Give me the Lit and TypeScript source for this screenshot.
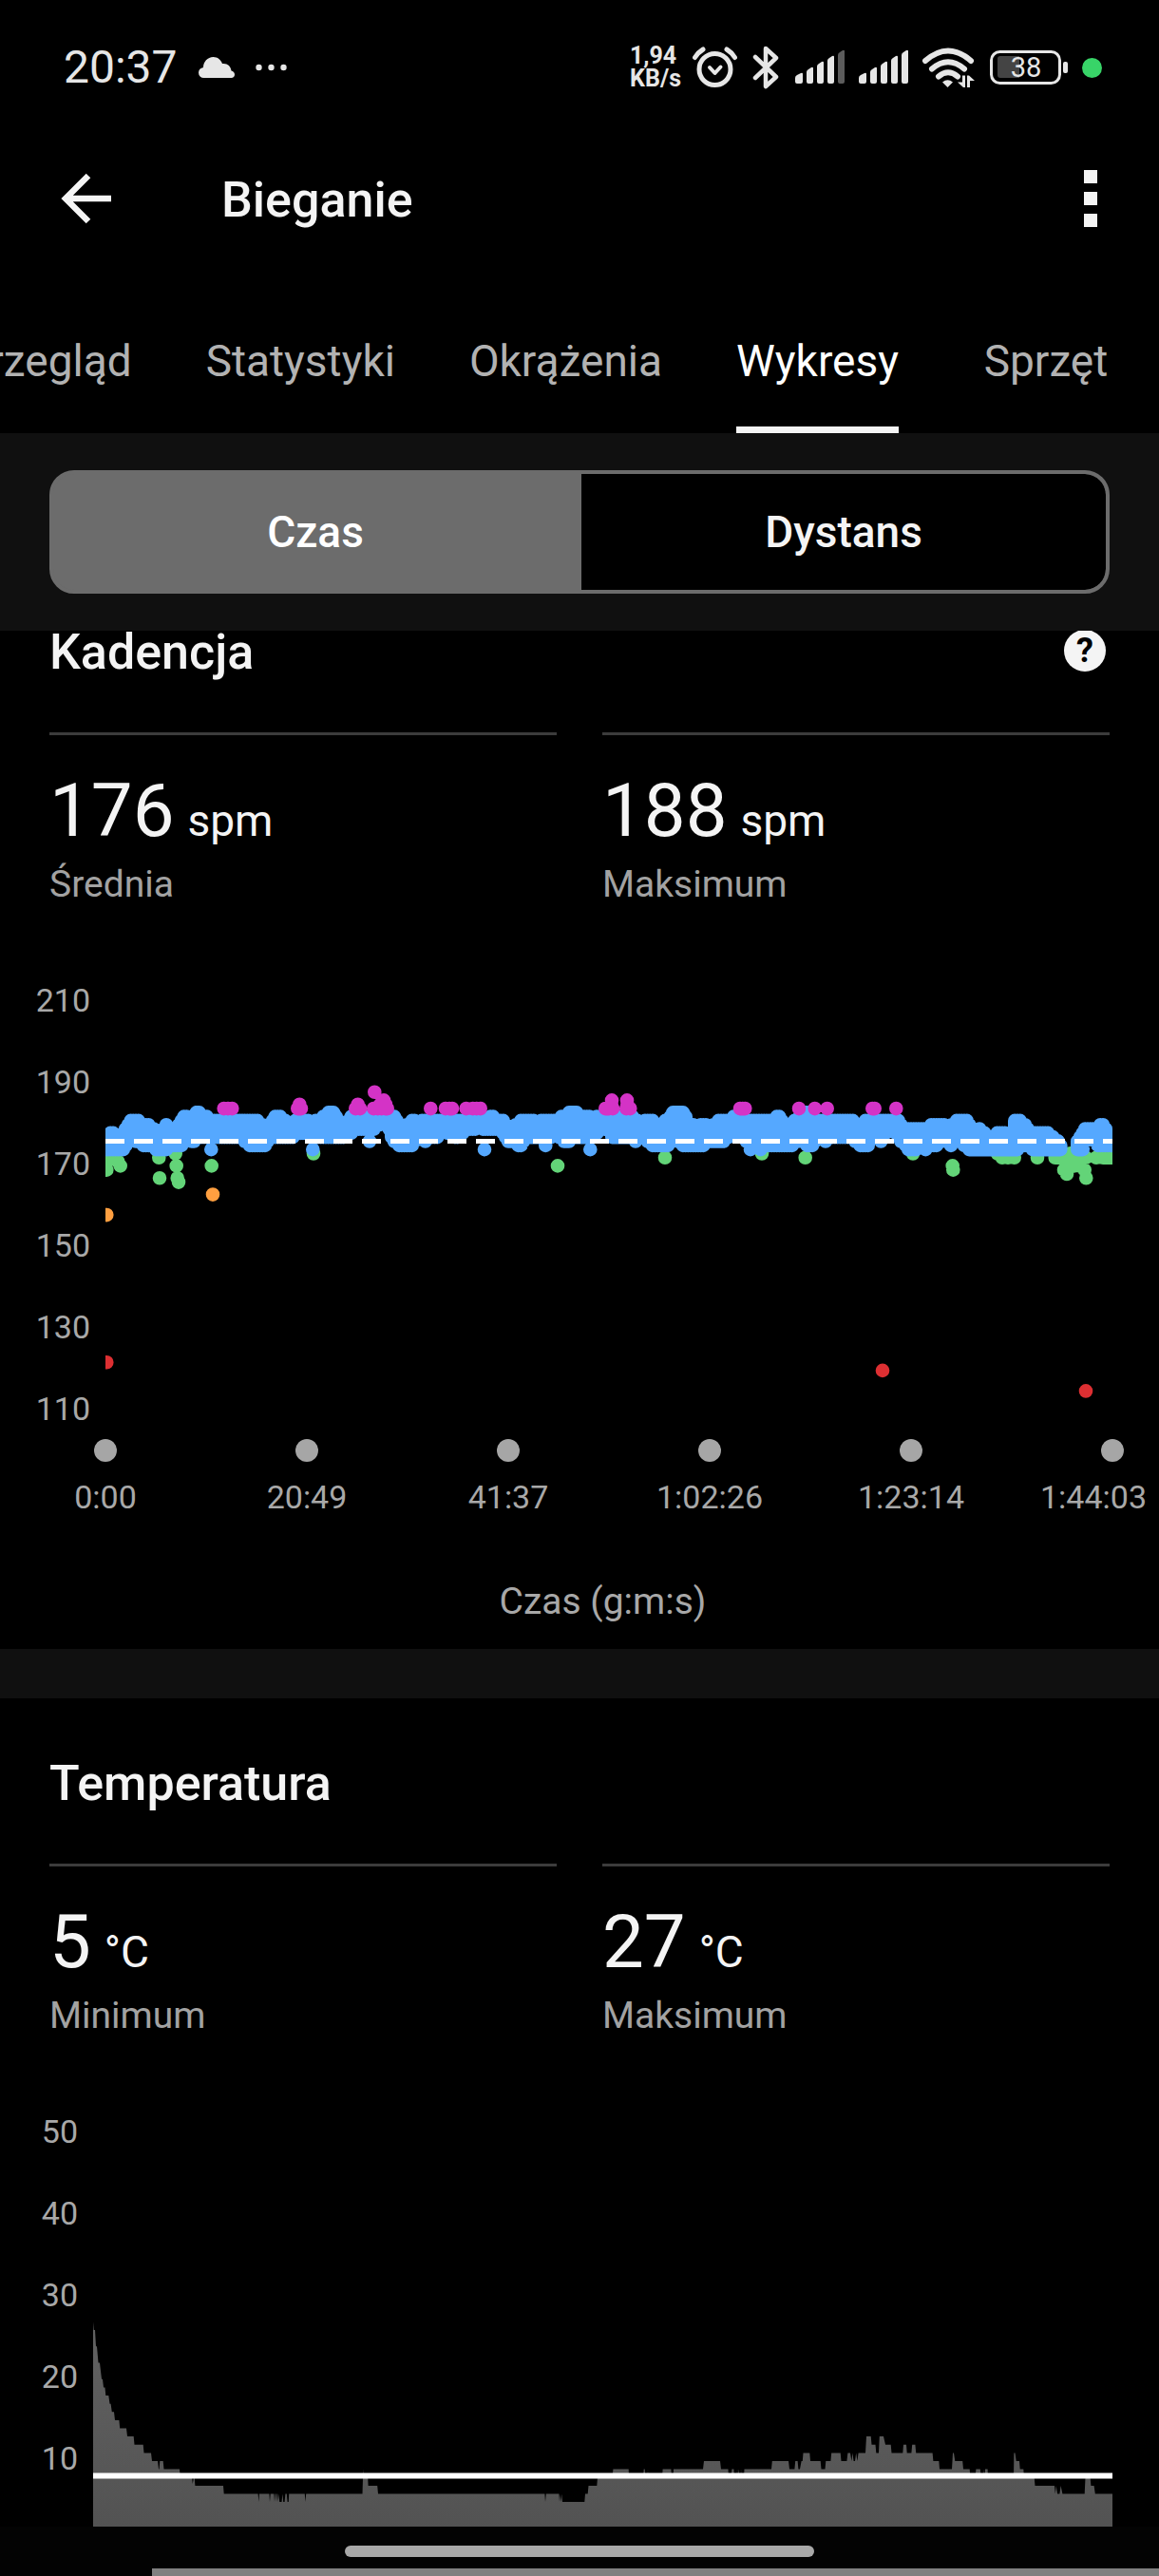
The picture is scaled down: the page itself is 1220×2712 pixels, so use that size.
import { LitElement, html, svg, css } from "lit";
import { customElement, property, state, query } from "lit/decorators.js";
import { classMap } from "lit/directives/class-map.js";

type Pt = [number, number];

/* ---------- cadence series: time in thirds of a plot unit, value in spm ---------- */

interface Band {
  upper: Pt[];
  lower: Pt[];
}

const CADENCE_BANDS: Band[] = [
  {
    upper: [
      [0, 177], [19, 178], [40, 177], [58, 178], [80, 181], [100, 181], [118, 180], [135, 180], [150, 179],
      [165, 177], [180, 179], [189, 180], [205, 179], [220, 178], [237, 181], [252, 182], [270, 181], [287, 183],
      [317, 182], [335, 181], [477, 181], [492, 180], [507, 179], [520, 180], [535, 182], [549, 182], [565, 181],
      [575, 180], [590, 180], [600, 181], [635, 181], [650, 180], [675, 181], [690, 182], [712, 183], [730, 182],
      [750, 179], [765, 181], [785, 182], [907, 182], [922, 181], [940, 179], [967, 181], [985, 180], [1005, 181],
      [1200, 181], [1217, 182], [1235, 181], [1252, 181], [1270, 179], [1283, 178], [1297, 180], [1317, 181],
      [1347, 181], [1365, 180], [1387, 181], [1420, 181], [1447, 182], [1478, 183], [1500, 182], [1523, 182],
      [1545, 181], [1555, 182], [1665, 182], [1685, 180], [1715, 181], [1747, 180], [1775, 181], [1797, 183],
      [1829, 183], [1842, 180], [1850, 180], [1869, 179], [1890, 180], [1909, 179], [1937, 181], [1970, 181],
      [1987, 182], [2017, 181], [2095, 181], [2130, 182], [2147, 180], [2160, 179], [2175, 181], [2217, 183],
      [2237, 181], [2357, 181], [2372, 180], [2382, 179], [2397, 181], [2500, 181], [2512, 180], [2527, 179],
      [2590, 179], [2617, 180], [2645, 180], [2662, 179], [2678, 180], [2689, 181], [2717, 181], [2732, 179],
      [2742, 178], [2763, 179], [2782, 177], [2797, 177], [2832, 178], [2852, 177], [2864, 178], [2872, 181],
      [2885, 181], [2902, 180], [2925, 178], [2967, 178], [2987, 177], [3002, 176], [3022, 175],
    ],
    lower: [
      [0, 174], [60, 174], [74, 177], [105, 176], [122, 175], [145, 175], [160, 174], [190, 174], [205, 175],
      [240, 175], [255, 177], [274, 176], [295, 177], [427, 177], [445, 176], [462, 175], [502, 175], [520, 177],
      [590, 177], [603, 179], [620, 178], [700, 177], [750, 177], [765, 178], [794, 179], [845, 179], [860, 180],
      [869, 181], [880, 181], [892, 180], [905, 177], [925, 175], [970, 175], [985, 177], [1040, 177], [1060, 178],
      [1067, 179], [1092, 178], [1112, 177], [1137, 179], [1162, 179], [1184, 180], [1197, 179], [1245, 179],
      [1260, 177], [1282, 176], [1312, 175], [1325, 177], [1405, 177], [1424, 178], [1437, 177], [1457, 176],
      [1480, 177], [1515, 177], [1550, 178], [1567, 179], [1587, 180], [1600, 177], [1700, 177], [1735, 175],
      [1777, 175], [1795, 177], [1830, 175], [1885, 175], [1905, 176], [1945, 176], [1960, 177], [1990, 178],
      [2007, 178], [2020, 176], [2095, 175], [2160, 175], [2180, 176], [2192, 177], [2215, 175], [2235, 175],
      [2250, 177], [2350, 177], [2370, 176], [2387, 175], [2407, 175], [2420, 178], [2460, 178], [2470, 179],
      [2487, 179], [2500, 178], [2515, 176], [2535, 174], [2552, 174], [2570, 175], [2615, 175], [2635, 176],
      [2650, 177], [2690, 177], [2702, 178], [2712, 175], [2732, 174], [2880, 174], [2893, 176], [2910, 175],
      [2940, 174], [3022, 174],
    ],
  },
  {
    upper: [[3070, 176], [3085, 178], [3102, 179], [3127, 179], [3142, 180], [3155, 180], [3165, 177], [3180, 177]],
    lower: [[3070, 174], [3087, 174], [3096, 177], [3115, 177], [3130, 175], [3180, 175]],
  },
];

const CADENCE_BLUE: Pt[] = [
  [287, 183], [334, 174], [655, 174], [712, 183], [834, 176], [1010, 176], [1197, 174], [1390, 175], [1531, 174],
  [1674, 176], [2037, 174], [2069, 174], [2274, 176], [2449, 176], [2590, 174], [2670, 175],
];

const CADENCE_PURPLE: Pt[] = [
  [374, 184], [387, 184], [400, 184], [607, 184], [618, 184], [613, 185], [790, 184], [804, 184], [797, 185],
  [847, 184], [860, 184], [872, 184], [884, 184], [890, 184], [868, 185], [885, 185], [879, 186], [850, 188],
  [1027, 184], [1074, 184], [1086, 184], [1095, 184], [1139, 184], [1160, 184], [1172, 184], [1184, 184],
  [1579, 184], [1590, 184], [1602, 184], [1599, 186], [1598, 185], [1645, 184], [1657, 184], [1648, 185],
  [1647, 186], [2004, 184], [2012, 184], [2020, 184], [2190, 184], [2240, 184], [2279, 184], [2422, 184],
  [2429, 184], [2497, 184],
];

const CADENCE_GREEN: Pt[] = [
  [4, 169], [4, 171], [20, 172], [30, 172], [40, 171], [47, 170], [169, 172], [171, 167], [221, 173], [224, 170],
  [227, 167], [231, 166], [335, 170], [657, 173], [1428, 170], [1767, 172], [2073, 173], [2210, 172],
  [2550, 173], [2675, 170], [2677, 169], [2817, 173], [2832, 172], [2850, 172], [2870, 172], [2943, 172],
  [2999, 172], [3015, 172], [3030, 172], [3047, 173], [3047, 172], [3065, 172], [3080, 172], [3096, 172],
  [3027, 169], [3036, 168], [3045, 170], [3060, 170], [3075, 170], [3092, 169], [3097, 167], [3129, 172],
  [3150, 172], [3165, 172], [3180, 172], [3170, 173], [3150, 173],
];

const CADENCE_ORANGE: Pt[] = [[4, 158], [339, 163]];
const CADENCE_RED: Pt[] = [[4, 122], [2454, 120], [3096, 115]];

/* ---------- temperature series: plot units, degrees ---------- */

const TEMPERATURE: Pt[] = [
  [0, 27], [0.7, 26], [2, 26], [3, 24], [4, 24], [5.5, 22], [7, 22], [8, 21], [9, 20], [10, 20], [11, 19],
  [12.5, 19], [13.3, 18], [16.3, 18], [17.5, 17], [18.6, 17], [19.8, 16], [22, 16], [23, 15], [27.4, 15],
  [28.2, 14], [35, 14], [36, 13], [42.7, 13], [43.5, 12], [52.7, 12], [53.5, 11], [61, 11], [62, 10], [68, 10],
  [69, 9], [69.6, 9], [70.3, 10], [73.7, 10], [74.5, 9], [91, 9], [91.8, 8], [104, 8], [104.8, 7.2], [106, 8],
  [106.7, 8], [107.4, 7], [137, 7], [137.7, 6], [173.6, 6], [174.4, 5], [174.9, 6], [185.4, 6], [186, 5],
  [186.7, 6], [190.4, 6], [191, 5], [191.6, 6], [192.4, 6], [193, 5], [193.6, 6], [194.2, 6], [194.8, 5],
  [195.4, 6], [196.2, 5], [198.5, 5], [199.4, 6], [200.2, 5], [201.6, 5], [202.4, 6], [203.8, 6], [204.6, 5],
  [205.8, 5], [206.2, 6], [222.8, 6], [223.4, 5], [224.2, 6], [283.5, 6], [284.3, 9], [285, 8], [289.2, 8],
  [289.6, 7], [299.2, 7], [300, 6], [475.4, 6], [476, 5], [476.8, 6], [490.4, 6], [491, 5], [491.7, 6],
  [492.4, 5], [493.2, 6], [494, 5], [517.3, 5], [518, 6], [520.7, 6], [521.5, 7], [530.3, 7], [531, 8],
  [546.6, 8], [547.4, 9], [563.7, 9], [564, 8], [579, 8], [579.7, 9], [580.7, 9], [581.4, 8], [583.6, 8],
  [584, 9], [584.4, 8], [599, 8], [599.6, 9], [608.4, 9], [609, 8], [610.6, 8], [611, 9], [642, 9], [643, 10],
  [660, 10], [661, 9], [668.5, 9], [669, 8], [671.6, 8], [672.4, 9], [674.4, 9], [675, 8], [677.6, 8], [678, 9],
  [678.6, 8], [679.8, 9], [680.4, 8], [681.6, 8], [682, 9], [682.6, 8], [685, 8], [685.5, 9], [714, 9],
  [714.8, 10], [732, 10], [733, 9], [738.4, 9], [739.2, 10], [741.6, 10], [742.4, 9], [744, 9], [745.6, 10],
  [746.8, 10], [747.5, 11], [754.3, 11], [755, 10], [765.7, 10], [766.5, 9], [770.5, 9], [771.3, 10],
  [776.4, 10], [777.2, 11], [786.7, 11], [787.5, 10], [793.4, 10], [794.4, 11], [797, 11], [798.4, 10],
  [799.4, 11], [800.6, 10], [802, 10], [803.2, 11], [804.4, 10], [805.6, 11], [813, 11], [814, 13], [818.7, 13],
  [819.5, 12], [823.5, 12], [824.3, 11], [827, 11], [827.8, 13], [832, 13], [834, 12], [839.7, 12], [840.5, 11],
  [852.3, 11], [853, 12], [856, 12], [856.7, 11], [861.4, 11], [862.2, 12], [865.4, 12], [866.2, 11],
  [883.6, 11], [884.4, 10], [890.3, 10], [891, 9], [904, 9], [905, 11], [906, 11], [907.3, 10], [915.2, 10],
  [916, 9], [922.7, 9], [923.4, 8], [928.6, 8], [929.4, 9], [933.8, 9], [934.6, 8], [937.2, 8], [937.8, 9],
  [938.4, 8], [939, 9], [941.6, 9], [942, 8], [969, 8], [969.4, 11], [970.5, 11], [971.7, 10], [975, 10],
  [975.7, 9], [979.3, 9], [980, 8], [990.7, 8], [991.5, 7], [1012, 7], [1012.8, 6], [1013.8, 7], [1015, 6],
  [1017.4, 6], [1018.6, 7], [1020.4, 6], [1043.7, 6], [1044.5, 8], [1049.6, 8], [1050.4, 7], [1053.6, 7],
  [1054.8, 6], [1073, 6],
];

const at = (line: Pt[], t: number): number => {
  for (let i = 1; i < line.length; i++) {
    const [t1, v1] = line[i];
    if (t <= t1) {
      const [t0, v0] = line[i - 1];
      return v0 + ((v1 - v0) * (t - t0)) / (t1 - t0 || 1);
    }
  }
  return line[line.length - 1][1];
};

const cadenceX = (t: number) => t / 3;
const cadenceY = (v: number) => 927 - 4.31 * v;
const temperatureY = (v: number) => 367 + (10 - v) * 8.62;

/** Vertical strokes with round caps, one for each sampled moment of a band. */
const bandPath = ({ upper, lower }: Band): string => {
  const first = upper[0][0];
  const last = upper[upper.length - 1][0];
  const parts: string[] = [];
  for (let t = first; t <= last; t += 8) {
    const hi = Math.round(at(upper, t));
    const lo = Math.min(hi, Math.round(at(lower, t)));
    parts.push(`M${cadenceX(t).toFixed(1)} ${cadenceY(hi).toFixed(1)}V${(cadenceY(lo) + 0.1).toFixed(1)}`);
  }
  return parts.join("");
};

const dotsPath = (points: Pt[]): string =>
  points.map(([t, v]) => `M${cadenceX(t).toFixed(1)} ${cadenceY(v).toFixed(1)}v.1`).join("");

const cadencePlot = () => svg`
  <path class="dots green" d=${dotsPath(CADENCE_GREEN)} />
  <path class="dots blue" d=${CADENCE_BANDS.map(bandPath).join("") + dotsPath(CADENCE_BLUE)} />
  <path class="dots purple" d=${dotsPath(CADENCE_PURPLE)} />
  <path class="dots orange" d=${dotsPath(CADENCE_ORANGE)} />
  <path class="dots red" d=${dotsPath(CADENCE_RED)} />
  <path class="average dashed" d="M0 168.5H1060" />
`;

const temperaturePlot = () => svg`
  <defs>
    <linearGradient id="warmth" x1="0" y1="0" x2="0" y2="1">
      <stop offset="0" stop-color="#626262" />
      <stop offset="1" stop-color="#505050" />
    </linearGradient>
  </defs>
  <path
    fill="url(#warmth)"
    d=${"M0 471" + TEMPERATURE.map(([x, v]) => `L${x} ${temperatureY(v).toFixed(1)}`).join("") + "V471Z"}
  />
  <path class="average" d="M0 382.5H1073" />
`;

/* ---------- status bar ---------- */

@customElement("status-bar")
class StatusBar extends LitElement {
  static styles = css`
    :host {
      display: flex;
      align-items: center;
      justify-content: space-between;
      height: 142px;
      padding: 0 60px 0 67px;
      color: #e6e6e6;
    }
    .side {
      display: flex;
      align-items: center;
    }
    .time {
      font-size: 48px;
      line-height: 56px;
    }
    .cloud {
      margin-left: 22px;
    }
    .more {
      margin-left: 22px;
    }
    .speed {
      margin-right: 12px;
      font-size: 25px;
      font-weight: 700;
      line-height: 24px;
    }
    .speed span {
      display: block;
    }
    svg {
      display: block;
      fill: currentColor;
    }
    .line {
      fill: none;
      stroke: currentColor;
      stroke-linecap: round;
      stroke-linejoin: round;
    }
    .alarm {
      margin-right: 16px;
    }
    .bluetooth {
      margin-right: 15px;
    }
    .signal {
      margin-right: 14px;
    }
    .wifi {
      margin-right: 16px;
    }
    .battery {
      display: grid;
      margin-right: 15px;
    }
    .battery > * {
      grid-area: 1 / 1;
    }
    .level {
      align-self: center;
      padding-right: 6px;
      font-size: 29px;
      line-height: 36px;
      text-align: center;
    }
    .live {
      width: 21px;
      height: 21px;
      border-radius: 50%;
      background: #38d468;
    }
  `;

  private signal(weak: boolean) {
    return html`<svg class="signal" width="53" height="36" viewBox="0 0 53 36" aria-hidden="true">
      <path
        d="M0 29q0-2 2-3l4-2q2-1 2 1v8q0 2-2 2H2q-2 0-2-2ZM12 23q0-2 2-3l3-2q2-1 2 1v14q0 2-2 2h-3q-2 0-2-2ZM23 17q0-2 2-3l3-2q2-1 2 1v20q0 2-2 2h-3q-2 0-2-2ZM34 11q0-2 2-3l3-2q2-1 2 1v26q0 2-2 2h-3q-2 0-2-2Z"
      />
      <path opacity=${weak ? 0.4 : 1} d="M45 5q0-2 2-3l3-2q2-1 2 1v32q0 2-2 2h-3q-2 0-2-2Z" />
    </svg>`;
  }

  render() {
    return html`
      <div class="side">
        <time class="time">20:37</time>
        <svg class="cloud" width="38" height="22" viewBox="0 0 38 22" aria-hidden="true">
          <path
            d="M5.5 22A5.5 5.5 0 0 1 0 16.5C0 13.5 2 11.5 5 11 5 5 9.5 0 15.5 0 20 0 23.5 2.8 25 7c5-.8 9 2.5 9.5 7.5C36.6 15 38 16.5 38 18.5 38 20.5 36.5 22 34.5 22Z"
          />
        </svg>
        <svg class="more" width="33" height="8" viewBox="0 0 33 8" aria-hidden="true">
          <circle cx="3.5" cy="4" r="3.2" />
          <circle cx="16.5" cy="4" r="3.2" />
          <circle cx="29.5" cy="4" r="3.2" />
        </svg>
      </div>
      <div class="side">
        <div class="speed"><span>1,94</span><span>KB/s</span></div>
        <svg class="alarm" width="47" height="44" viewBox="0 0 47 44" aria-hidden="true">
          <g class="line" stroke-width="5">
            <circle cx="23.5" cy="24" r="16.5" />
            <path stroke-width="4" d="m18 22 5.5 6 6-6.5" />
            <path d="M2.5 11.500Q6 6 11 3M44.500 11.500Q41 6 36 3" />
          </g>
        </svg>
        <svg class="bluetooth" width="30" height="46" viewBox="0 0 30 46" aria-hidden="true">
          <path class="line" stroke-width="4.5" d="m3 12 22 21L14 43V3l11 10L3 34" />
        </svg>
        ${this.signal(true)} ${this.signal(false)}
        <svg class="wifi" width="55" height="42" viewBox="0 0 55 42" aria-hidden="true">
          <g class="line" stroke-width="6">
            <path d="M3 14Q27 -7 51 14" />
            <path d="M10 22.500Q27 8 44 22.500" />
            <path d="M17 30.500Q27 22 37 30.500" />
          </g>
          <path d="M21 36.500Q26.500 32 32 36.500L26.500 42Z" />
          <path d="M42 29.500h3V42h-2l-6-5.500h5ZM47 42V29.500h2l6 5.500h-5v7Z" />
        </svg>
        <div class="battery">
          <svg width="82" height="36" viewBox="0 0 82 36" aria-hidden="true">
            <rect x="1.5" y="1.5" width="72" height="33" rx="9" fill="none" stroke="currentColor" stroke-width="3" />
            <path fill="#444" d="M11 6h20v23H11q-3 0-3-3V9q0-3 3-3Z" />
            <rect x="77" y="12" width="5" height="12" rx="2" />
          </svg>
          <span class="level">38</span>
        </div>
        <span class="live"></span>
      </div>
    `;
  }
}

/* ---------- chart section ---------- */

interface Stat {
  value: string;
  unit: string;
  label: string;
}

@customElement("metric-section")
class MetricSection extends LitElement {
  @property() heading = "";
  @property({ type: Boolean }) help = false;
  @property({ type: Boolean, reflect: true }) narrow = false;
  @property({ attribute: false }) stats: Stat[] = [];
  @property({ attribute: false }) scale: number[] = [];
  @property({ attribute: false }) times: string[] = [];
  @property({ attribute: false }) plot: () => unknown = () => "";

  static styles = css`
    :host {
      display: block;
      --axis: 111px;
    }
    :host([narrow]) {
      --axis: 98px;
    }
    .head {
      display: flex;
      align-items: flex-start;
      justify-content: space-between;
      padding: 60px 56px 54px 52px;
    }
    h2 {
      margin: 0;
      font-size: 52px;
      font-weight: 500;
      line-height: 60px;
    }
    .help {
      width: 44px;
      height: 44px;
      margin-top: 6px;
      padding: 0;
      border: 0;
      border-radius: 50%;
      background: #f4f4f4;
      color: #000;
      font: 700 36px/44px Roboto, sans-serif;
    }
    .stats {
      display: grid;
      grid-template-columns: 1fr 1fr;
      gap: 48px;
      margin: 0;
      padding: 0 52px;
    }
    .stat {
      display: flex;
      flex-direction: column-reverse;
      gap: 8px;
      padding-top: 34px;
      border-top: 3px solid #3c3c3c;
    }
    dt {
      color: #a2a2a2;
      font-size: 39px;
      line-height: 46px;
    }
    dd {
      margin: 0;
      font-size: 78px;
      line-height: 92px;
    }
    .unit {
      margin-left: 14px;
      font-size: 46px;
      line-height: 54px;
    }
    figure {
      display: grid;
      grid-template-columns: var(--axis) 1fr;
      margin: 79px 49px 0 0;
      color: #a8a8a8;
    }
    .scale,
    .times {
      margin: 0;
      padding: 0;
      list-style: none;
      font-size: 34px;
      line-height: 40px;
    }
    .scale {
      display: flex;
      flex-direction: column;
      gap: 46px;
      padding-right: 16px;
      text-align: right;
    }
    .plot {
      display: block;
      width: 100%;
      height: 471px;
      overflow: hidden;
    }
    .times {
      display: flex;
      grid-column: 2;
      justify-content: space-between;
      margin: 11px -12px 0;
    }
    .times li {
      display: flex;
      flex-direction: column;
      align-items: center;
      gap: 17px;
      width: 24px;
      white-space: nowrap;
    }
    .times li::before {
      content: "";
      width: 24px;
      height: 24px;
      flex: none;
      border-radius: 50%;
      background: #a6a6a6;
    }
    .times li:last-child {
      align-items: flex-end;
    }
    .times li:last-child span {
      margin-right: -24px;
    }
    figcaption {
      grid-column: 1 / -1;
      padding: 67px 0 27px 98px;
      font-size: 39px;
      line-height: 46px;
      text-align: center;
    }
    .dots {
      fill: none;
      stroke-linecap: round;
      stroke-width: 14.6;
    }
    .blue {
      stroke: #55a8ff;
    }
    .green {
      stroke: #63d478;
    }
    .purple {
      stroke: #d433c6;
    }
    .orange {
      stroke: #ff9f40;
    }
    .red {
      stroke: #dd2f32;
    }
    .average {
      fill: none;
      stroke: #fff;
      stroke-width: 6;
    }
    .dashed {
      stroke-width: 5;
      stroke-dasharray: 20 10;
    }
  `;

  render() {
    const width = this.narrow ? 1073 : 1060;
    return html`
      <div class="head">
        <h2>${this.heading}</h2>
        ${this.help ? html`<button class="help" type="button">?</button>` : ""}
      </div>
      <dl class="stats">
        ${this.stats.map(
          (s) => html`<div class="stat">
            <dt>${s.label}</dt>
            <dd>${s.value}<span class="unit">${s.unit}</span></dd>
          </div>`
        )}
      </dl>
      <figure>
        <ul class="scale">
          ${this.scale.map((n) => html`<li>${n}</li>`)}
        </ul>
        <svg class="plot" viewBox="0 0 ${width} 471" preserveAspectRatio="none" aria-hidden="true">${this.plot()}</svg>
        ${this.times.length
          ? html`<ul class="times">
                ${this.times.map((t) => html`<li><span>${t}</span></li>`)}
              </ul>
              <figcaption>Czas (g:m:s)</figcaption>`
          : ""}
      </figure>
    `;
  }
}

/* ---------- page ---------- */

const TABS = ["Przegląd", "Statystyki", "Okrążenia", "Wykresy", "Sprzęt"];
const MODES = ["Czas", "Dystans"];

@customElement("app-root")
class AppRoot extends LitElement {
  @state() private tab = "Wykresy";
  @state() private mode = "Czas";
  @query(".scroll") private scroller!: HTMLElement;

  static styles = css`
    :host {
      display: flex;
      flex-direction: column;
      height: 100vh;
      overflow: hidden;
      background: #000;
      color: #f4f4f4;
      font-family: Roboto, sans-serif;
    }
    button {
      border: 0;
      background: none;
      color: inherit;
      font-family: inherit;
    }
    header {
      display: flex;
      align-items: center;
      height: 134px;
      padding: 0 61px;
    }
    .icon {
      display: flex;
      padding: 0;
    }
    .icon svg {
      display: block;
    }
    h1 {
      flex: 1;
      margin: 0 0 0 108px;
      padding-top: 4px;
      font-size: 52px;
      font-weight: 500;
      line-height: 60px;
    }
    .tabs {
      display: flex;
      flex: none;
      justify-content: flex-end;
      gap: 78px;
      padding: 77px 42px 0 0;
      overflow: hidden;
    }
    .tab {
      flex: none;
      min-width: 154px;
      padding: 0 0 42px;
      border-bottom: 7px solid transparent;
      color: #b2b2b2;
      font-size: 46px;
      line-height: 54px;
      white-space: nowrap;
    }
    .tab.current {
      border-color: #f4f4f4;
      color: #fff;
    }
    .modes {
      flex: none;
      padding: 39px 52px;
      background: #101010;
    }
    .segments {
      display: grid;
      grid-template-columns: 1fr 1fr;
      gap: 4px;
      border: 4px solid #6c6c6c;
      border-radius: 26px;
      background: #6c6c6c;
      overflow: hidden;
    }
    .segment {
      padding: 34px 0;
      background: #000;
      font-size: 46px;
      font-weight: 500;
      line-height: 54px;
    }
    .segment:last-child {
      border-radius: 0 22px 22px 0;
    }
    .segment.current {
      background: #6c6c6c;
      color: #fff;
    }
    .scroll {
      flex: 1;
      min-height: 0;
      overflow-y: auto;
      scrollbar-width: none;
    }
    .divider {
      height: 52px;
      background: #101010;
    }
    footer {
      display: flex;
      flex: none;
      flex-direction: column;
      align-items: center;
      gap: 12px;
      padding-top: 20px;
      background: #030303;
    }
    .pill {
      width: 494px;
      max-width: 60%;
      height: 12px;
      border-radius: 6px;
      background: #a8a8a8;
    }
    .progress {
      align-self: stretch;
      height: 8px;
      margin-left: 160px;
      background: #808080;
    }
  `;

  async firstUpdated() {
    await Promise.all(
      [...this.renderRoot.querySelectorAll<MetricSection>("metric-section")].map((m) => m.updateComplete)
    );
    this.scroller.scrollTop = 67;
  }

  render() {
    return html`
      <status-bar></status-bar>
      <header>
        <button class="icon" type="button" aria-label="Wstecz">
          <svg width="64" height="64" viewBox="0 0 64 64">
            <path fill="none" stroke="#f4f4f4" stroke-width="6.5" d="M56 32H9M32 8 8 32l24 24" />
          </svg>
        </button>
        <h1>Bieganie</h1>
        <button class="icon" type="button" aria-label="Menu">
          <svg width="22" height="64" viewBox="0 0 22 64">
            <path fill="#f4f4f4" d="M4 2h14v14H4ZM4 25h14v14H4ZM4 48h14v14H4Z" />
          </svg>
        </button>
      </header>
      <nav class="tabs" role="tablist">
        ${TABS.map(
          (t) => html`<button
            class=${classMap({ tab: true, current: t === this.tab })}
            type="button"
            role="tab"
            aria-selected=${t === this.tab ? "true" : "false"}
            @click=${() => (this.tab = t)}
          >${t}</button>`
        )}
      </nav>
      <div class="modes">
        <div class="segments">
          ${MODES.map(
            (m) => html`<button
              class=${classMap({ segment: true, current: m === this.mode })}
              type="button"
              aria-pressed=${m === this.mode ? "true" : "false"}
              @click=${() => (this.mode = m)}
            >${m}</button>`
          )}
        </div>
      </div>
      <main class="scroll">
        <metric-section
          heading="Kadencja"
          help
          .stats=${[
            { value: "176", unit: "spm", label: "Średnia" },
            { value: "188", unit: "spm", label: "Maksimum" },
          ]}
          .scale=${[210, 190, 170, 150, 130, 110]}
          .times=${["0:00", "20:49", "41:37", "1:02:26", "1:23:14", "1:44:03"]}
          .plot=${cadencePlot}
        ></metric-section>
        <div class="divider"></div>
        <metric-section
          heading="Temperatura"
          narrow
          .stats=${[
            { value: "5", unit: "°C", label: "Minimum" },
            { value: "27", unit: "°C", label: "Maksimum" },
          ]}
          .scale=${[50, 40, 30, 20, 10]}
          .plot=${temperaturePlot}
        ></metric-section>
      </main>
      <footer>
        <div class="pill"></div>
        <div class="progress"></div>
      </footer>
    `;
  }
}
